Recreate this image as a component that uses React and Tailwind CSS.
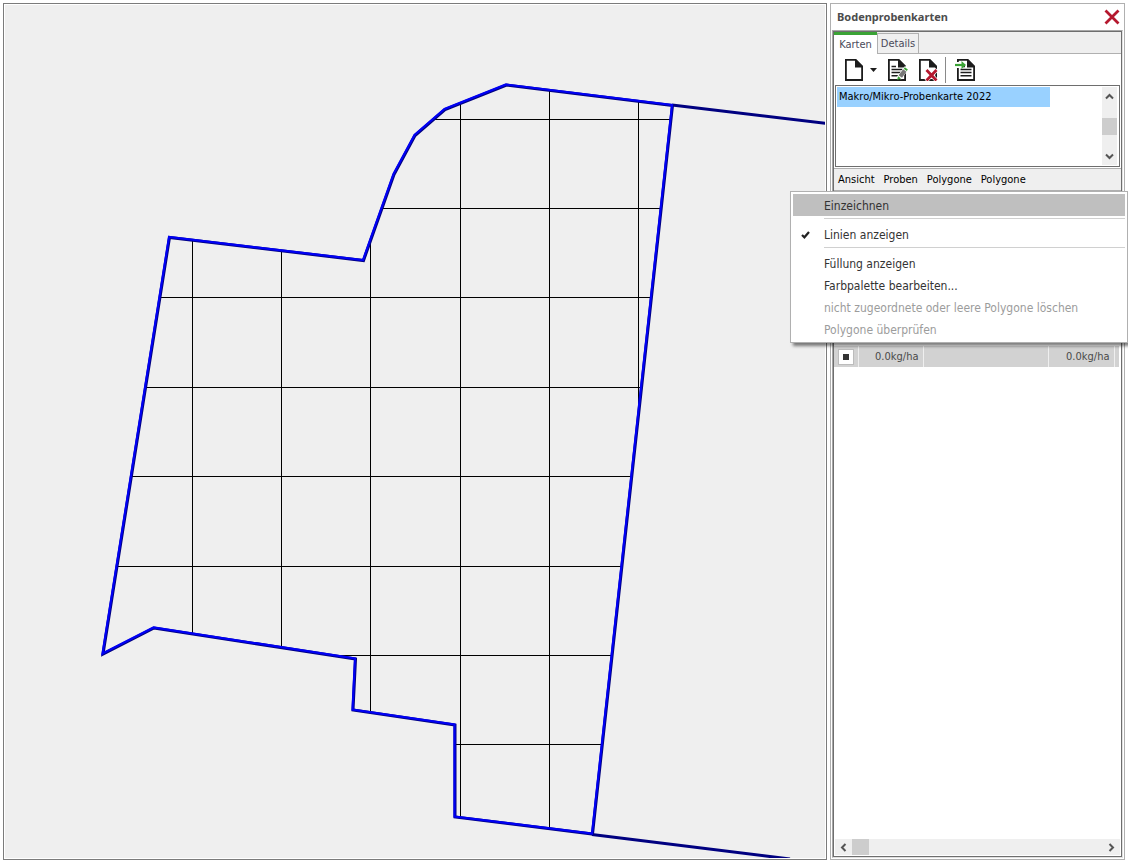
import React, { useState } from 'react';
import clsx from 'clsx';

const FIELD = '506,84.5 672,105 592,833.5 454.5,816.5 454.5,724.5 352.5,709.5 355,658.5 153.5,627.5 102.5,653.5 169,237 363,260 393.5,174 414.5,135 444.5,109';
const GRID_X = [192, 281, 370, 460, 549, 638];
const GRID_Y = [119, 208, 297, 387, 476, 566, 655, 744];

const MENU = [
  { label: 'Einzeichnen', active: true },
  null,
  { label: 'Linien anzeigen', checked: true },
  null,
  { label: 'Füllung anzeigen' },
  { label: 'Farbpalette bearbeiten...' },
  { label: 'nicht zugeordnete oder leere Polygone löschen', disabled: true },
  { label: 'Polygone überprüfen', disabled: true },
];

function FieldMap() {
  return (
    <main className="min-w-0 flex-1 border border-[#7b7b7b] bg-white p-px">
      <svg className="block h-full w-full bg-[#efefef]" viewBox="5 5 820 853" preserveAspectRatio="xMinYMin slice" role="img" aria-label="Feldkarte">
        <defs>
          <clipPath id="field">
            <polygon points={FIELD} />
          </clipPath>
        </defs>
        <g clipPath="url(#field)" fill="#000" shapeRendering="crispEdges">
          {GRID_X.map((x) => <rect key={x} x={x} y="5" width="1" height="853" />)}
          {GRID_Y.map((y) => <rect key={y} x="5" y={y} width="820" height="1" />)}
        </g>
        <g fill="none" stroke="#000080" strokeWidth="3">
          <path d="M672 105L840 125M592 834.5L790 859" />
          <polygon points={FIELD} transform="translate(.5 .5)" />
        </g>
        <polygon points={FIELD} fill="none" stroke="#0000f4" strokeWidth="2.2" />
      </svg>
    </main>
  );
}

function Chevron({ d }) {
  return (
    <svg width="9" height="9" viewBox="0 0 9 9" fill="none" stroke="#555" strokeWidth="2" aria-hidden="true">
      <path d={d} />
    </svg>
  );
}

function PageIcon({ lines, children }) {
  return (
    <svg width="22" height="22" viewBox="0 0 22 22" fill="none" stroke="#1c1c1c" strokeWidth="1.8" aria-hidden="true">
      <path d="M2.9 .9H12.5L19.1 7.5V21H2.9Z" fill="#fff" />
      <path d="M12 0H13L20 7V8.5H12Z" fill="#1c1c1c" stroke="none" />
      {lines && <path d="M5.5 7.5H10M5.5 10.5H16.5M5.5 13.5H16.5M5.5 16.8H16.5" strokeWidth="1.6" />}
      {children}
    </svg>
  );
}

function Toolbar() {
  return (
    <div className="flex h-[31px] items-center pt-px pl-[9px]">
      <button aria-label="Neu" className="flex items-center gap-[5px]">
        <PageIcon />
        <svg width="7" height="4" viewBox="0 0 7 4" aria-hidden="true"><path d="M0 0H7L3.5 4Z" fill="#1c1c1c" /></svg>
      </button>
      <button aria-label="Bearbeiten" className="ml-[9px]">
        <PageIcon lines>
          <path d="M21 8.5L13 19" stroke="#fff" strokeWidth="5" />
          <path d="M18.8 11.5L14.3 17.5" stroke="#777" strokeWidth="4.2" />
          <path d="M18.3 9L21.3 11.2" stroke="#3aa335" strokeWidth="2" />
          <path d="M11 21L12.2 17.2L15 19.4Z" fill="#3aa335" stroke="none" />
        </PageIcon>
      </button>
      <button aria-label="Löschen" className="ml-[9px]">
        <PageIcon>
          <path d="M9 10.5L20 22M20 10.5L9 22" stroke="#fff" strokeWidth="4" />
          <path d="M9.5 11L19.5 21.5M19.5 11L9.5 21.5" stroke="#b5182e" strokeWidth="2.8" />
        </PageIcon>
      </button>
      <span className="ml-[6px] h-[26px] w-px bg-[#8a8a8a]" />
      <button aria-label="Importieren" className="ml-[9px]">
        <PageIcon lines>
          <path d="M0 6H8" stroke="#fff" strokeWidth="6" />
          <path d="M0 6H8" stroke="#3aa335" strokeWidth="2.2" />
          <path d="M6.5 2L11 6L6.5 10Z" fill="#3aa335" stroke="none" />
        </PageIcon>
      </button>
    </div>
  );
}

function ContextMenu() {
  return (
    <div role="menu" className="absolute top-[calc(100%+1px)] right-[-7px] z-10 w-[338px] border border-[#b0b0b0] bg-white p-[2px] text-[12px] text-[#333] shadow-[3px_3px_3px_rgba(0,0,0,0.5)]">
      {MENU.map((item, i) =>
        item ? (
          <button
            key={item.label}
            role="menuitem"
            disabled={item.disabled}
            className={clsx('flex h-[22px] w-full items-center pt-px text-left whitespace-nowrap', item.active && 'bg-[#bfbfbf]', item.disabled && 'text-[#9c9c9c]')}
          >
            <span className="flex w-[31px] shrink-0 pl-[8px]">
              {item.checked && (
                <svg width="9" height="8" viewBox="0 0 9 8" aria-hidden="true">
                  <path d="M1 4L3.4 6.3L8 1" fill="none" stroke="#222" strokeWidth="2.2" />
                </svg>
              )}
            </span>
            {item.label}
          </button>
        ) : (
          <div key={i} className="h-[7px] pt-[2px] pl-[31px]">
            <div className="h-px bg-[#d0d0d0]" />
          </div>
        )
      )}
    </div>
  );
}

export default function App() {
  const [tab, setTab] = useState('Karten');

  return (
    <div className="flex h-screen gap-[3px] overflow-hidden bg-white p-[3px] font-['DejaVu_Sans_Condensed','DejaVu_Sans',sans-serif] text-[11px] leading-[14px] text-black">
      <FieldMap />

      <aside className="flex w-[295px] shrink-0 flex-col border border-[#b0b0b0] px-px pb-px">
        <header className="flex h-[26px] shrink-0 items-center justify-between pr-[3px] pl-[5px]">
          <h1 className="font-['Noto_Sans',sans-serif] text-[11px] font-bold text-[#4d4d4d]">Bodenprobenkarten</h1>
          <button aria-label="Schließen">
            <svg width="16" height="16" viewBox="0 0 16 16" stroke="#b5182e" strokeWidth="2.8" aria-hidden="true">
              <path d="M1.5 1.5L14.5 14.5M14.5 1.5L1.5 14.5" />
            </svg>
          </button>
        </header>

        <div className="flex min-h-0 flex-1 flex-col border border-[#a8a8a8] border-r-[#e0e0e0] border-b-[#e0e0e0]">
          <div className="flex min-h-0 flex-1 flex-col border border-[#6e6e6e]">
            <div role="tablist" className="flex h-[22px] shrink-0 items-end bg-[#efefef] text-[#4a4a5a]">
              {['Karten', 'Details'].map((name) => (
                <button
                  key={name}
                  role="tab"
                  aria-selected={tab === name}
                  onClick={() => setTab(name)}
                  className={clsx(tab === name ? 'h-[22px] w-[43px] border-t-[3px] border-[#3aa335] bg-white' : 'h-[21px] w-[42px] border border-[#b0b0b0] pt-px')}
                >
                  {name}
                </button>
              ))}
              <span className="flex-1 border-b border-[#b0b0b0]" />
            </div>

            <Toolbar />

            <div className="mx-px flex h-[82px] shrink-0 border border-[#6e6e6e] py-px pr-[2px] pl-px">
              <ul className="flex-1">
                <li className="h-[20px] w-[213px] bg-[#99d1ff] pt-[3px] pl-[2px]">Makro/Mikro-Probenkarte 2022</li>
              </ul>
              <div className="flex w-[15px] flex-col items-center bg-[#efefef] pt-[5px]">
                <Chevron d="M1 6.5L4.5 3L8 6.5" />
                <span className="mt-[17px] mb-[17px] h-[17px] w-full bg-[#cdcdcd]" />
                <Chevron d="M1 2.5L4.5 6L8 2.5" />
              </div>
            </div>

            <nav className="relative mt-px flex h-[23px] shrink-0 items-center gap-[9px] border-t border-b border-[#b0b0b0] bg-[#efefef] pt-px pl-[4px]">
              <button>Ansicht</button>
              <button>Proben</button>
              <button>Polygone</button>
              <button>Polygone</button>
              <ContextMenu />
            </nav>

            <div className="flex-1 pt-[155px] pr-[2px]">
              <table className="w-full table-fixed border-collapse bg-[#d2d2d2] text-[#4a4a4a]">
                <tbody>
                  <tr className="h-[21px] text-right">
                    <td className="w-[24px] border-r border-[#efefef]">
                      <button aria-label="Zeile auswählen" className="mx-auto flex h-[16px] w-[16px] items-center justify-center border border-[#bcbcbc] bg-white">
                        <span className="h-[6px] w-[6px] bg-[#333]" />
                      </button>
                    </td>
                    <td className="w-[65px] border-r border-[#efefef] pr-[4px]">0.0kg/ha</td>
                    <td className="border-r border-[#efefef]" />
                    <td className="w-[66px] border-r border-[#efefef] pr-[4px]">0.0kg/ha</td>
                    <td className="w-[5px]" />
                  </tr>
                </tbody>
              </table>
            </div>

            <div className="mx-px mb-px flex h-[16px] shrink-0 items-center bg-[#efefef] px-[4px]">
              <Chevron d="M6.5 1L3 4.5L6.5 8" />
              <span className="ml-[4px] h-[16px] w-[17px] bg-[#cdcdcd]" />
              <span className="flex-1" />
              <Chevron d="M2.5 1L6 4.5L2.5 8" />
            </div>
          </div>
        </div>
      </aside>
    </div>
  );
}
